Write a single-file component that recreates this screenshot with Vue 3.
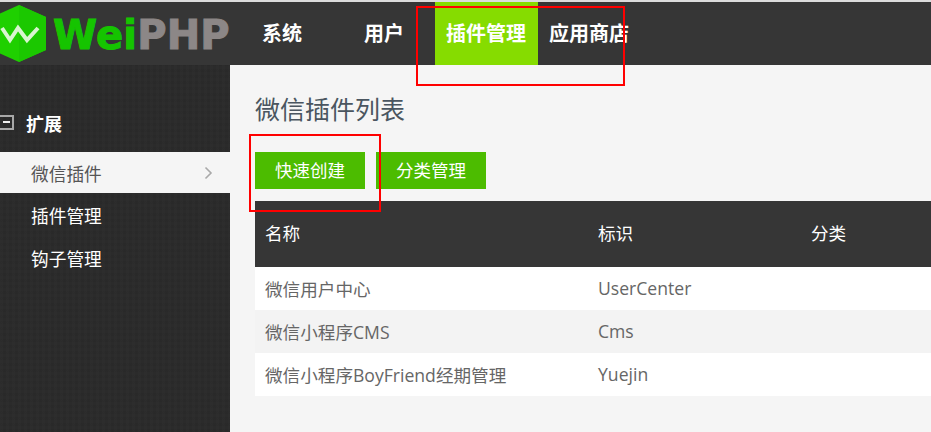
<template>
  <div class="page">
    <header class="topbar">
      <div class="logo">
        <svg class="logo-mark" width="47" height="57" viewBox="0 0 47 57">
          <polygon points="19,0 46,12 46,45 19,57 -8,45 -8,12" fill="#1fd000" />
          <polygon points="19,0 46,12 46,45 19,57" fill="#1bc800" />
          <path d="M2 23 L10 35 L18 23 L27 35 L38 23" fill="none" stroke="#d9f5d0" stroke-width="4" />
        </svg>
        <span class="logo-text"><b class="wei">Wei</b><b class="php">PHP</b></span>
      </div>
      <nav class="nav">
        <a v-for="item in navItems" :key="item" class="nav-item" :class="{ active: item === '插件管理' }">{{ item }}</a>
      </nav>
    </header>

    <div class="body">
      <aside class="sidebar">
        <div class="side-title">
          <span class="minus"></span>
          <span>扩展</span>
        </div>
        <a v-for="item in sideItems" :key="item" class="side-item" :class="{ current: item === '微信插件' }">
          {{ item }}
          <svg v-if="item === '微信插件'" class="chevron" width="9" height="14" viewBox="0 0 9 14">
            <path d="M1.5 1.5 L7 7 L1.5 12.5" fill="none" stroke="#a9a9a9" stroke-width="1.6" />
          </svg>
        </a>
      </aside>

      <main class="content">
        <h2 class="title">微信插件列表</h2>
        <div class="actions">
          <a class="btn">快速创建</a>
          <a class="btn">分类管理</a>
        </div>
        <div class="table">
          <div class="row head">
            <span>名称</span><span>标识</span><span>分类</span>
          </div>
          <div v-for="row in rows" :key="row.id" class="row">
            <span>{{ row.name }}</span><span>{{ row.id }}</span><span></span>
          </div>
        </div>
      </main>
    </div>

    <!-- 截图上的红色标注框 -->
    <div class="mark mark-nav"></div>
    <div class="mark mark-btn"></div>
  </div>
</template>

<script setup>
const navItems = ['系统', '用户', '插件管理', '应用商店']
const sideItems = ['微信插件', '插件管理', '钩子管理']
const rows = [
  { name: '微信用户中心', id: 'UserCenter' },
  { name: '微信小程序CMS', id: 'Cms' },
  { name: '微信小程序BoyFriend经期管理', id: 'Yuejin' }
]
</script>

<style>
html, body { margin: 0; overflow: hidden; }
</style>

<style scoped>
.page {
  position: relative;
  width: 931px;
  height: 432px;
  overflow: hidden;
  background: #f5f5f5;
  font-family: "Open Sans", "Noto Sans CJK SC", sans-serif;
}
.topbar {
  display: flex;
  height: 63px;
  border-top: 2px solid #dcdcdc;
  background: #363636;
}
.logo {
  display: flex;
  align-items: center;
  width: 230px;
  height: 63px;
  flex: none;
  overflow: hidden;
}
.logo-mark { flex: none; overflow: visible; }
.logo-text {
  margin-left: 6px;
  margin-top: 2px;
  font-family: "DejaVu Sans", sans-serif;
  font-size: 40px;
  letter-spacing: 0.2px;
  white-space: nowrap;
  -webkit-text-stroke: 1px currentColor;
}
.wei { color: #15c400; }
.php { color: #8c8787; }
.nav { display: flex; padding-left: 21px; }
.nav-item {
  height: 63px;
  padding: 0 12px 0 11px;
  line-height: 64px;
  font-size: 20px;
  font-weight: 700;
  color: #fff;
}
.nav-item:nth-child(1) { margin-right: 39px; }
.nav-item:nth-child(2) { margin-right: 19px; }
.active { background: #86dc00; }
.body { display: flex; height: 367px; }
.sidebar {
  width: 230px;
  flex: none;
  background-color: #2b2b2b;
  background-image:
    repeating-linear-gradient(90deg, rgba(255,255,255,0.012) 0 3px, transparent 3px 6px),
    repeating-linear-gradient(0deg, rgba(0,0,0,0.04) 0 3px, transparent 3px 6px);
}
.side-title {
  display: flex;
  align-items: center;
  height: 87px;
  padding-top: 29px;
  box-sizing: border-box;
  padding-left: 26px;
  position: relative;
  font-size: 18px;
  font-weight: 700;
  color: #fff;
}
.minus {
  position: absolute;
  left: -2px;
  top: 50px;
  width: 12px;
  height: 11px;
  border: 2px solid #a8a8a8;
}
.minus::after {
  content: "";
  position: absolute;
  left: 3px;
  top: 4px;
  width: 7px;
  height: 2px;
  background: #eee;
}
.side-item {
  display: flex;
  align-items: center;
  justify-content: space-between;
  height: 43px;
  padding: 1px 17px 0 31px;
  box-sizing: border-box;
  font-size: 17.7px;
  color: #fff;
}
.current {
  height: 41px;
  padding-top: 0;
  background: #f5f5f5;
  color: #555;
}
.content {
  flex: 1;
  padding: 0 0 0 25px;
  min-width: 0;
}
.title {
  margin: 26px 0 0;
  height: 61px;
  font-size: 25px;
  line-height: 36px;
  font-weight: 400;
  color: #4a5560;
}
.actions { display: flex; gap: 11px; }
.btn {
  width: 110px;
  height: 37px;
  line-height: 37px;
  text-align: center;
  font-size: 17.5px;
  color: #fff;
  background: #4cbc00;
}
.table { margin-top: 12px; }
.row {
  display: grid;
  grid-template-columns: 333px 213px 1fr;
  height: 43px;
  padding-left: 10px;
  padding-bottom: 1px;
  box-sizing: border-box;
  align-items: center;
  font-size: 17.6px;
  color: #666;
  background: #fff;
}
.row:nth-child(3) { background: #f3f3f3; }
.row.head {
  height: 66px;
  padding-bottom: 3px;
  background: #363636;
  color: #fff;
}
.mark {
  position: absolute;
  border: 2px solid #f00;
  box-sizing: border-box;
}
.mark-nav { left: 416px; top: 6px; width: 209px; height: 80px; }
.mark-btn { left: 249px; top: 134px; width: 132px; height: 78px; }
</style>
